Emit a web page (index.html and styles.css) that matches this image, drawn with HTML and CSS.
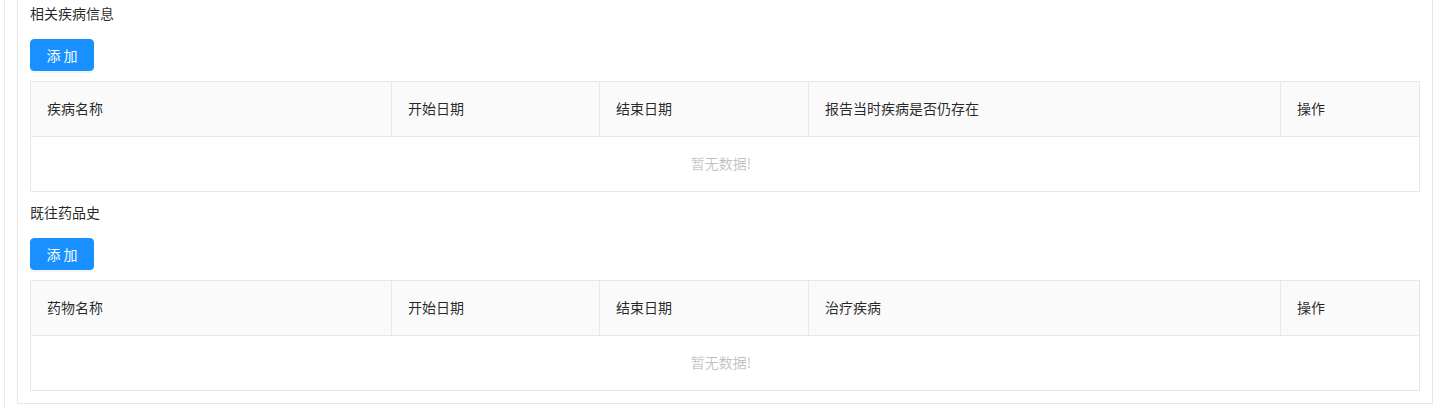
FILE: index.html
```html
<!DOCTYPE html>
<html lang="zh">
<head>
<meta charset="utf-8">
<link rel="stylesheet" href="styles.css">
</head>
<body>
<div class="outer">
  <div class="card">
    <section class="section">
      <div class="section-title">相关疾病信息</div>
      <button class="btn-primary">添 加</button>
      <table class="data-table">
        <colgroup>
          <col class="c1"><col class="c2"><col class="c3"><col class="c4"><col class="c5">
        </colgroup>
        <thead>
          <tr><th>疾病名称</th><th>开始日期</th><th>结束日期</th><th>报告当时疾病是否仍存在</th><th>操作</th></tr>
        </thead>
        <tbody>
          <tr><td class="empty" colspan="5">暂无数据!</td></tr>
        </tbody>
      </table>
    </section>
    <section class="section second">
      <div class="section-title">既往药品史</div>
      <button class="btn-primary">添 加</button>
      <table class="data-table">
        <colgroup>
          <col class="c1"><col class="c2"><col class="c3"><col class="c4"><col class="c5">
        </colgroup>
        <thead>
          <tr><th>药物名称</th><th>开始日期</th><th>结束日期</th><th>治疗疾病</th><th>操作</th></tr>
        </thead>
        <tbody>
          <tr><td class="empty" colspan="5">暂无数据!</td></tr>
        </tbody>
      </table>
    </section>
  </div>
</div>
</body>
</html>
```

FILE: styles.css
```css
html, body {
  margin: 0;
  padding: 0;
  background: #fff;
}
body {
  font-family: "Microsoft YaHei", "Noto Sans CJK SC", "Noto Sans", sans-serif;
  font-size: 14px;
  color: rgba(0, 0, 0, 0.85);
  overflow: hidden;
}
.outer {
  margin-left: 4px;
  border-left: 1px solid #ececec;
  padding-left: 12px;
  height: 409px;
  box-sizing: border-box;
}
.card {
  width: 1416px;
  box-sizing: border-box;
  border: 1px solid #e8e8e8;
  border-top: none;
  padding: 3px 12px 12px 12px;
  background: #fff;
}
.section {
  display: flex;
  flex-direction: column;
  align-items: flex-start;
}
.section.second {
  margin-top: 10px;
}
.section-title {
  line-height: 20px;
  height: 22px;
  color: rgba(0, 0, 0, 0.85);
}
.btn-primary {
  margin-top: 14px;
  margin-bottom: 10px;
  width: 64px;
  height: 32px;
  border: 1px solid #1890ff;
  border-radius: 4px;
  background: #1890ff;
  color: #fff;
  font-family: inherit;
  font-size: 14px;
  padding: 0 0 1px 0;
  box-shadow: 0 2px 0 rgba(0, 0, 0, 0.045);
  cursor: pointer;
}
.data-table {
  width: 1389px;
  border-collapse: collapse;
  table-layout: fixed;
  border: 1px solid #e8e8e8;
}
.c1 { width: 361px; }
.c2 { width: 208px; }
.c3 { width: 209px; }
.c4 { width: 472px; }
.c5 { width: 139px; }
.data-table th {
  background: #fafafa;
  height: 55px;
  padding: 0 16px 2px 16px;
  text-align: left;
  font-weight: normal;
  color: rgba(0, 0, 0, 0.85);
  border-right: 1px solid #e8e8e8;
  border-bottom: 1px solid #e8e8e8;
  box-sizing: border-box;
}
.data-table th:last-child {
  border-right: none;
}
.data-table td.empty {
  height: 55px;
  box-sizing: border-box;
  text-align: center;
  color: rgba(0, 0, 0, 0.25);
  padding: 0 8px 2px 0;
}
```
